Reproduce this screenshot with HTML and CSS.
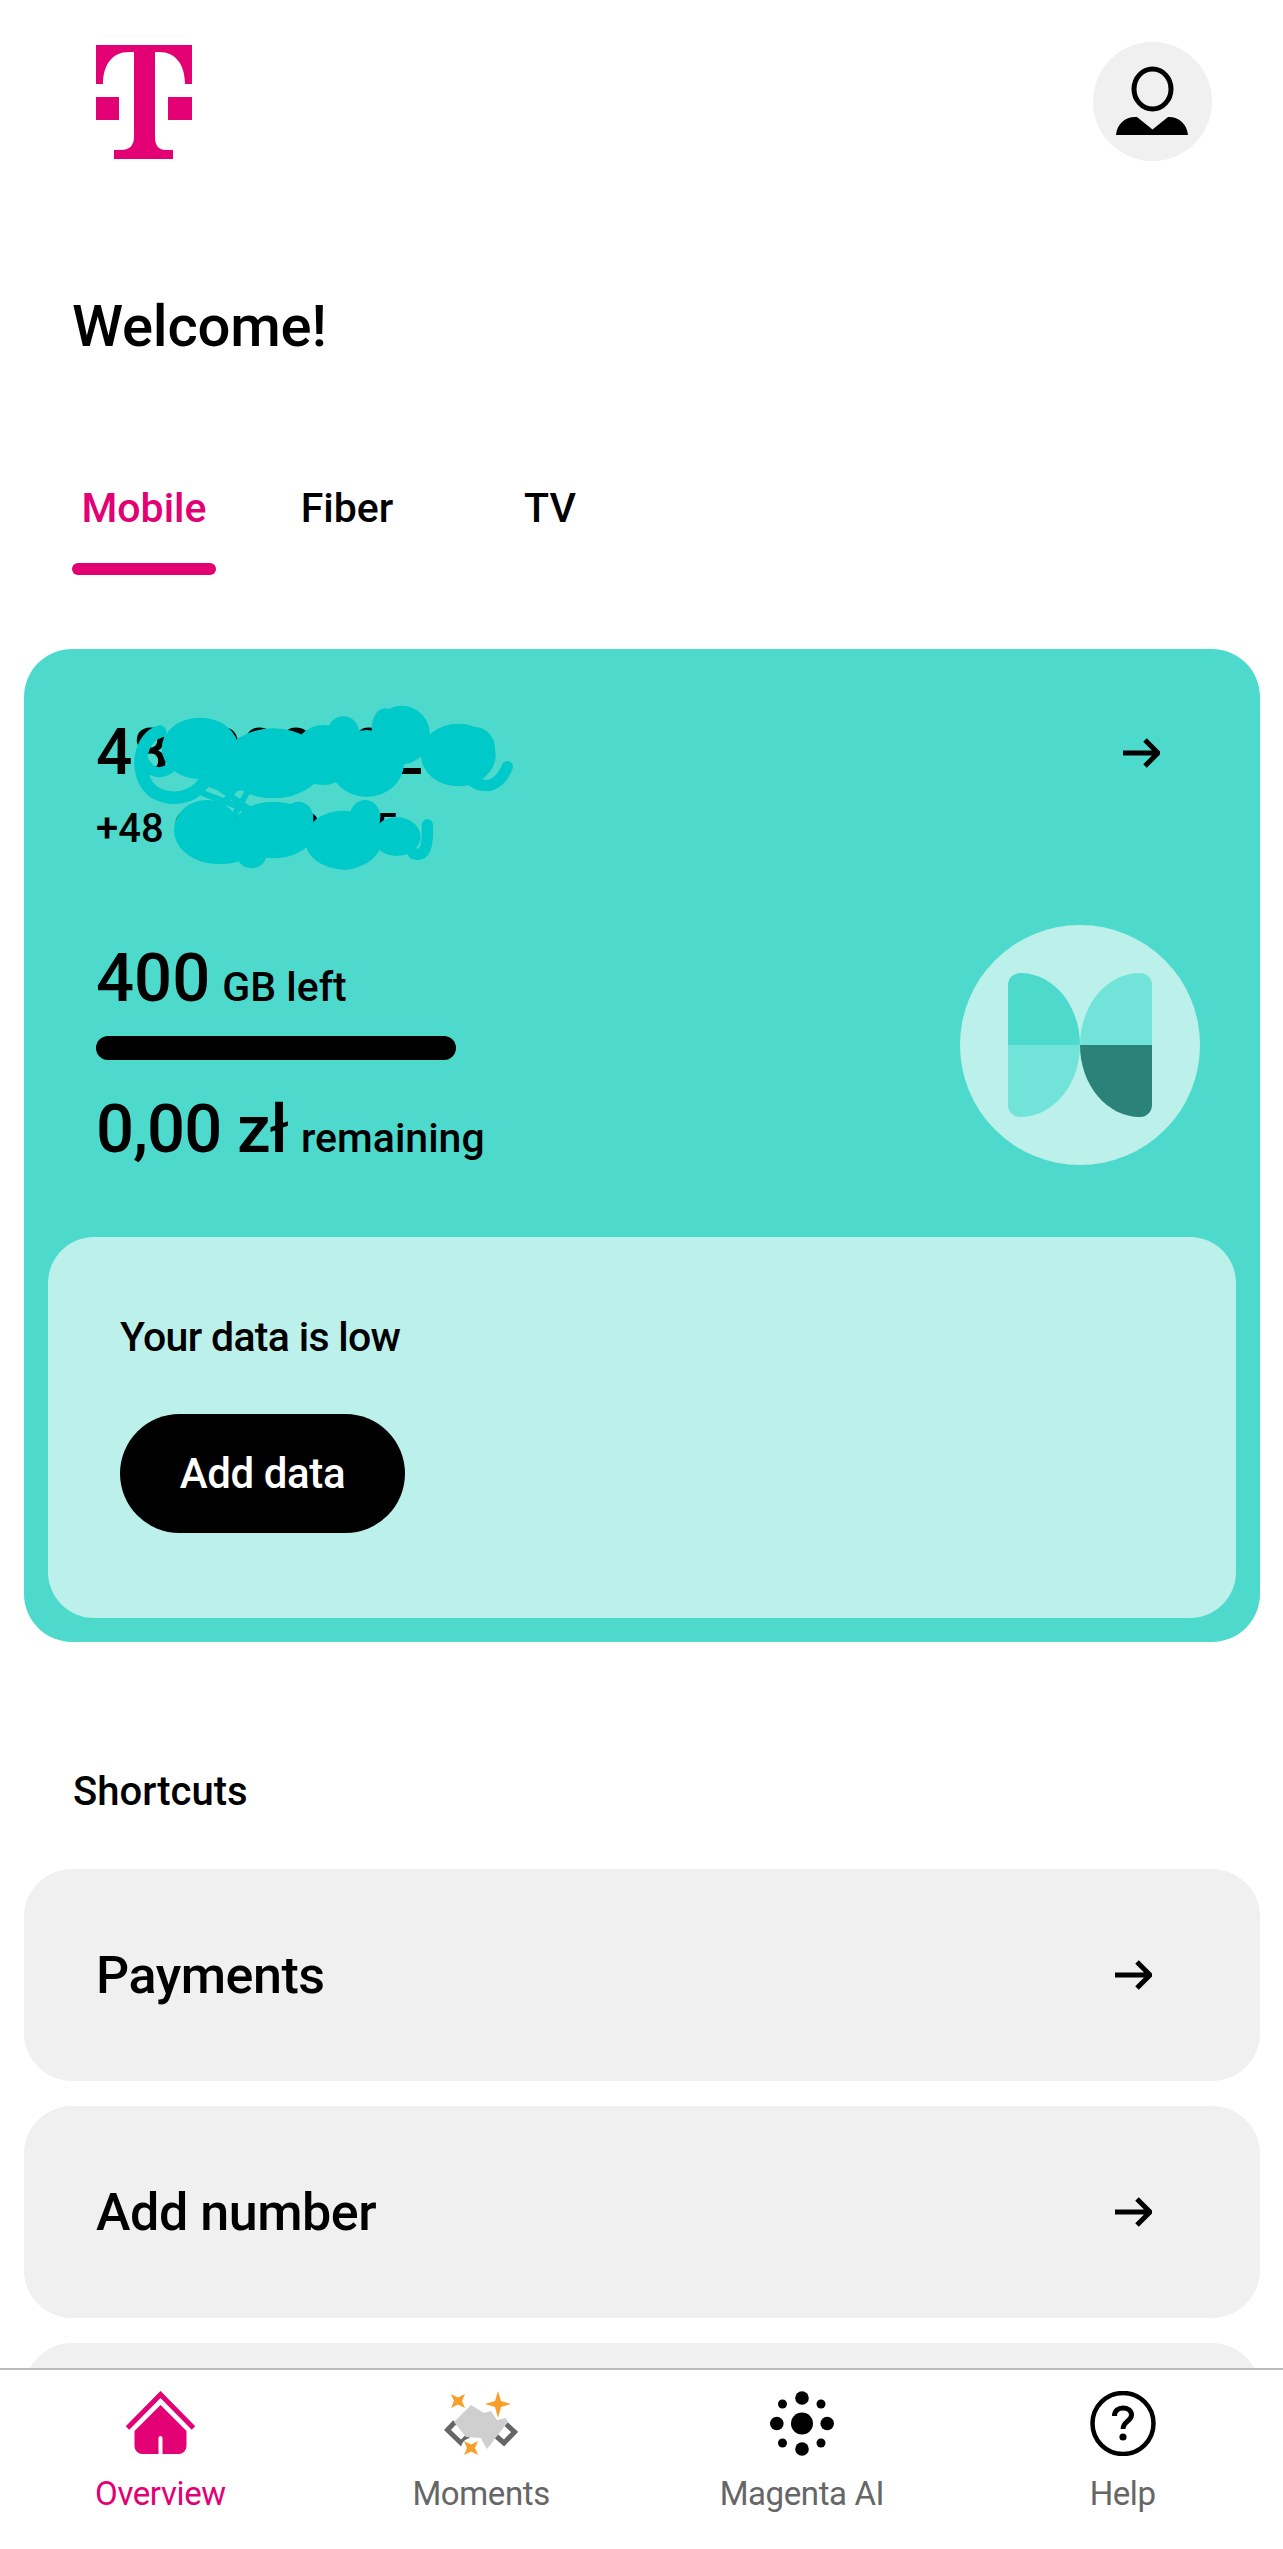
FILE: index.html
```html
<!DOCTYPE html>
<html lang="en">
<head>
  <meta charset="UTF-8" />
  <meta name="viewport" content="width=device-width, initial-scale=1.0" />
  <title>Overview</title>
  <link rel="stylesheet" href="styles.css">
</head>
<body>

  <main class="content">
    <header class="top-bar">
      <svg class="logo" viewBox="0 0 96 114" width="96" height="114">
        <path fill="#e20074" d="M0 0H96V39H89C89 20 80 7 63 7H59V92C59 101 63 105 70 105H77V114H18V105H25C33 105 38 101 38 92V7H33C16 7 7 20 7 39H0Z" />
        <rect fill="#e20074" x="0" y="52" width="23" height="23" />
        <rect fill="#e20074" x="72" y="52" width="24" height="23" />
      </svg>
      <a class="avatar">
        <svg viewBox="0 0 119 119" width="119" height="119">
          <ellipse cx="59.5" cy="47" rx="18.5" ry="20" fill="none" stroke="#000" stroke-width="5" />
          <path d="M23 93C24 82 32 75 42 75H44L59.5 87.5L75 75H76C86 75 94 82 95 93Z" />
        </svg>
      </a>
    </header>

    <h1 class="welcome">Welcome!</h1>

    <nav class="tabs">
      <div class="tab active">Mobile</div>
      <div class="tab">Fiber</div>
      <div class="tab">TV</div>
    </nav>

    <section class="plan-card">
      <div class="plan-top">
        <div class="plan-head">
          <div>
            <div class="plan-name">480000002</div>
            <div class="plan-phone">+48 000 000 005</div>
          </div>
          <svg class="arrow" viewBox="0 0 38 32" width="38" height="32"><path d="M1 16H36M23 3L36 16L23 29" /></svg>
        </div>

        <div class="plan-body">
          <div class="plan-stats">
            <div class="stat"><span class="stat-big">400</span> <span class="stat-small">GB left</span></div>
            <div class="data-bar"></div>
            <div class="stat balance"><span class="stat-big">0,00 zł</span> <span class="stat-small">remaining</span></div>
          </div>
          <div class="plan-badge">
            <svg viewBox="0 0 144 144" width="144" height="144">
              <path fill="#4ddacc" d="M0 72V12A12 12 0 0 1 12 0C45 0 72 32 72 72Z" />
              <path fill="#72e3d8" d="M0 72V132A12 12 0 0 0 12 144C45 144 72 112 72 72Z" />
              <path fill="#72e3d8" d="M144 72V12A12 12 0 0 0 132 0C99 0 72 32 72 72Z" />
              <path fill="#2a8279" d="M144 72V132A12 12 0 0 1 132 144C99 144 72 112 72 72Z" />
            </svg>
          </div>
        </div>

        <!-- scribble over the number -->
        <svg class="scribble" viewBox="0 0 1500 720" width="500" height="240">
          <g fill="#00c9c9">
            <ellipse cx="1025" cy="225" rx="85" ry="88" />
            <ellipse cx="975" cy="205" rx="40" ry="60" />
            <ellipse cx="1195" cy="285" rx="112" ry="94" />
            <ellipse cx="1240" cy="265" rx="65" ry="65" />
            <ellipse cx="920" cy="310" rx="112" ry="100" />
            <ellipse cx="790" cy="285" rx="90" ry="90" />
            <ellipse cx="850" cy="215" rx="46" ry="46" />
            <ellipse cx="640" cy="310" rx="150" ry="105" />
            <ellipse cx="420" cy="265" rx="115" ry="92" />
            <ellipse cx="510" cy="320" rx="110" ry="75" />
            <ellipse cx="440" cy="510" rx="98" ry="90" />
            <ellipse cx="480" cy="550" rx="115" ry="62" />
            <ellipse cx="640" cy="510" rx="125" ry="85" />
            <ellipse cx="715" cy="475" rx="45" ry="50" />
            <ellipse cx="850" cy="540" rx="115" ry="88" />
            <ellipse cx="915" cy="470" rx="46" ry="50" />
            <ellipse cx="855" cy="575" rx="65" ry="55" />
            <ellipse cx="1010" cy="530" rx="72" ry="58" />
            <ellipse cx="575" cy="590" rx="42" ry="34" />
          </g>
          <g fill="none" stroke="#00c9c9" stroke-linecap="round">
            <path stroke-width="38" d="M300 215C240 230 215 340 280 395C340 430 400 410 430 370" />
            <path stroke-width="30" d="M250 300C270 340 300 345 330 325" />
            <path stroke-width="34" d="M1240 365C1280 390 1320 375 1342 320" />
            <path stroke-width="34" d="M1060 580C1095 592 1105 560 1102 495" />
            <path stroke-width="18" d="M430 350L600 470M530 380L460 470M430 400L560 450M560 400L520 470" />
          </g>
        </svg>
      </div>

      <div class="notice">
        <p class="notice-text">Your data is low</p>
        <a class="btn-add">Add data</a>
      </div>
    </section>

    <h2 class="section-title">Shortcuts</h2>

    <div class="shortcuts">
      <a class="shortcut">
        <span>Payments</span>
        <svg class="arrow" viewBox="0 0 38 32" width="38" height="32"><path d="M1 16H36M23 3L36 16L23 29" /></svg>
      </a>
      <a class="shortcut">
        <span>Add number</span>
        <svg class="arrow" viewBox="0 0 38 32" width="38" height="32"><path d="M1 16H36M23 3L36 16L23 29" /></svg>
      </a>
      <a class="shortcut"></a>
    </div>
  </main>

  <nav class="bottom-nav">
    <a class="nav-item active">
      <svg viewBox="0 0 69 65" width="69" height="65">
        <path fill="none" stroke="#e20074" stroke-width="5" d="M1.5 37L34.5 3.5L67.5 37" />
        <path fill="#e20074" d="M34.5 14L8.5 40V55A8 8 0 0 0 16.5 63H32.500V47A2 2 0 0 1 36.500 47V63H52.500A8 8 0 0 0 60.500 55V40Z" />
      </svg>
      <span>Overview</span>
    </a>
    <a class="nav-item">
      <svg viewBox="0 0 74 65" width="74" height="65">
        <path fill="none" stroke="#666" stroke-width="5" d="M11 31L3.500 39L17 52L24 45M62 33L70.500 41L60 52L52 45" />
        <path fill="#cfcfcf" d="M27 14L40 22L47 20L53 29L62 27L64 31L43 58L40 53L37 47L22 46L10 31Z" />
        <circle cx="27" cy="57" r="10" fill="#fff" />
        <path fill="#f79e2b" d="M54 0L57 10L67 13L57 16L54 27L51 16L41 13L51 10Z" />
        <path fill="#f79e2b" d="M7 3L14 6.500L21 3L18 10L21 17L14 13.500L7 17L10 10Z" />
        <path fill="#f79e2b" d="M20 50L27 53.500L34 50L31 57L34 64L27 60.500L20 64L23 57Z" />
      </svg>
      <span>Moments</span>
    </a>
    <a class="nav-item">
      <svg viewBox="0 0 64 65" width="64" height="65">
        <circle cx="32" cy="32.500" r="11" />
        <circle cx="32" cy="7" r="6.800" />
        <circle cx="32" cy="58" r="6.800" />
        <circle cx="6.800" cy="32.500" r="6.800" />
        <circle cx="57.200" cy="32.500" r="6.800" />
        <circle cx="12.500" cy="13" r="4.500" />
        <circle cx="51" cy="13" r="4.500" />
        <circle cx="12.500" cy="52" r="4.500" />
        <circle cx="51" cy="52" r="4.500" />
      </svg>
      <span>Magenta AI</span>
    </a>
    <a class="nav-item">
      <svg viewBox="0 0 66 65" width="66" height="65">
        <circle cx="33" cy="32.500" r="30.500" fill="none" stroke="#000" stroke-width="4.500" />
        <path fill="none" stroke="#000" stroke-width="5" d="M24.500 25C24.500 19.500 28.500 17 33 17C37.500 17 41.500 19.500 41.500 24C41.500 30 33 30.500 33 38" />
        <circle cx="33" cy="46" r="3.600" />
      </svg>
      <span>Help</span>
    </a>
  </nav>

</body>
</html>
```

FILE: styles.css
```css
* {
  box-sizing: border-box;
}

body {
  margin: 0;
  padding: 0;
  height: 2549px;
  display: flex;
  flex-direction: column;
  overflow: hidden;
  background: #fff;
  color: #000;
  font-family: 'Roboto', 'Noto Sans', sans-serif;
  font-weight: 500;
}

.content {
  flex: 1;
  min-height: 0;
  overflow: hidden;
}

/* header */
.top-bar {
  display: flex;
  justify-content: space-between;
  align-items: flex-start;
  padding: 42px 71px 0 96px;
}

.logo {
  display: block;
  margin-top: 3px;
}

.avatar {
  display: block;
  width: 119px;
  height: 119px;
  border-radius: 50%;
  background: #f0f0f0;
}

.avatar svg {
  display: block;
}

.welcome {
  margin: 130px 0 0 72px;
  font-size: 58px;
  line-height: 70px;
  font-weight: 500;
  letter-spacing: -0.2px;
}

/* tabs */
.tabs {
  display: flex;
  gap: 59px;
  margin: 122px 0 0 72px;
}

.tab {
  width: 144px;
  font-size: 41px;
  line-height: 50px;
  text-align: center;
}

.tab.active {
  color: #e20074;
}

.tab.active::after {
  content: '';
  display: block;
  height: 12px;
  margin-top: 30px;
  border-radius: 6px;
  background: #e20074;
}

/* plan card */
.plan-card {
  width: 1236px;
  margin: 74px 0 0 24px;
  padding-bottom: 24px;
  border-radius: 48px;
  background: #4ddacc;
}

.plan-top {
  position: relative;
  height: 588px;
  padding: 69px 60px 0 72px;
}

.plan-head {
  display: flex;
  justify-content: space-between;
  align-items: flex-start;
  padding-right: 40px;
}

.plan-head .arrow {
  margin-top: 19px;
}

.plan-name {
  font-size: 64px;
  line-height: 70px;
}

.plan-phone {
  margin-top: 16px;
  font-size: 40px;
  line-height: 50px;
}

.scribble {
  position: absolute;
  left: 36px;
  top: 11px;
}

.plan-body {
  display: flex;
  justify-content: space-between;
  align-items: flex-start;
  margin-top: 71px;
}

.plan-stats {
  margin-top: 20px;
}

.stat {
  height: 68px;
  line-height: 68px;
  white-space: nowrap;
}

.stat-big {
  font-size: 67px;
  line-height: 1;
}

.stat-small {
  margin-left: 8px;
  font-size: 41px;
  line-height: 1;
}

.data-bar {
  width: 360px;
  height: 24px;
  margin-top: 23px;
  border-radius: 12px;
  background: #000;
}

.balance {
  margin-top: 36px;
}

.balance .stat-big {
  letter-spacing: -1px;
}

.balance .stat-small {
  margin-left: 9px;
}

.plan-badge {
  display: flex;
  align-items: center;
  justify-content: center;
  width: 240px;
  height: 240px;
  border-radius: 50%;
  background: #bcf1eb;
}

.notice {
  height: 381px;
  margin: 0 24px;
  padding: 75px 72px 0;
  border-radius: 46px;
  background: #bcf1eb;
}

.notice-text {
  margin: 0;
  font-size: 41px;
  line-height: 50px;
  letter-spacing: -0.7px;
}

.btn-add {
  display: flex;
  align-items: center;
  justify-content: center;
  width: 285px;
  height: 119px;
  margin-top: 52px;
  border-radius: 60px;
  background: #000;
  color: #fff;
  font-size: 42px;
  letter-spacing: -0.4px;
}

/* shortcuts */
.section-title {
  margin: 125px 0 52px 73px;
  font-size: 40px;
  line-height: 50px;
  font-weight: 500;
}

.shortcuts {
  display: flex;
  flex-direction: column;
  gap: 25px;
  width: 1236px;
  margin-left: 24px;
}

.shortcut {
  display: flex;
  flex: none;
  justify-content: space-between;
  align-items: center;
  height: 212px;
  padding: 0 108px 0 72px;
  border-radius: 48px;
  background: #f0f0f0;
  font-size: 52px;
  letter-spacing: -0.45px;
}

.arrow {
  display: block;
  flex: none;
}

.arrow path {
  fill: none;
  stroke: #000;
  stroke-width: 5;
}

/* bottom navigation */
.bottom-nav {
  display: grid;
  flex: none;
  grid-template-columns: repeat(4, 1fr);
  height: 181px;
  padding-top: 21px;
  border-top: 2px solid #bbb;
  background: #fff;
}

.nav-item {
  display: flex;
  flex-direction: column;
  align-items: center;
  gap: 18px;
  color: #666;
  font-size: 33px;
  font-weight: 400;
  line-height: 40px;
  letter-spacing: -0.4px;
}

.nav-item svg {
  display: block;
}

.nav-item.active {
  color: #e20074;
}
```
